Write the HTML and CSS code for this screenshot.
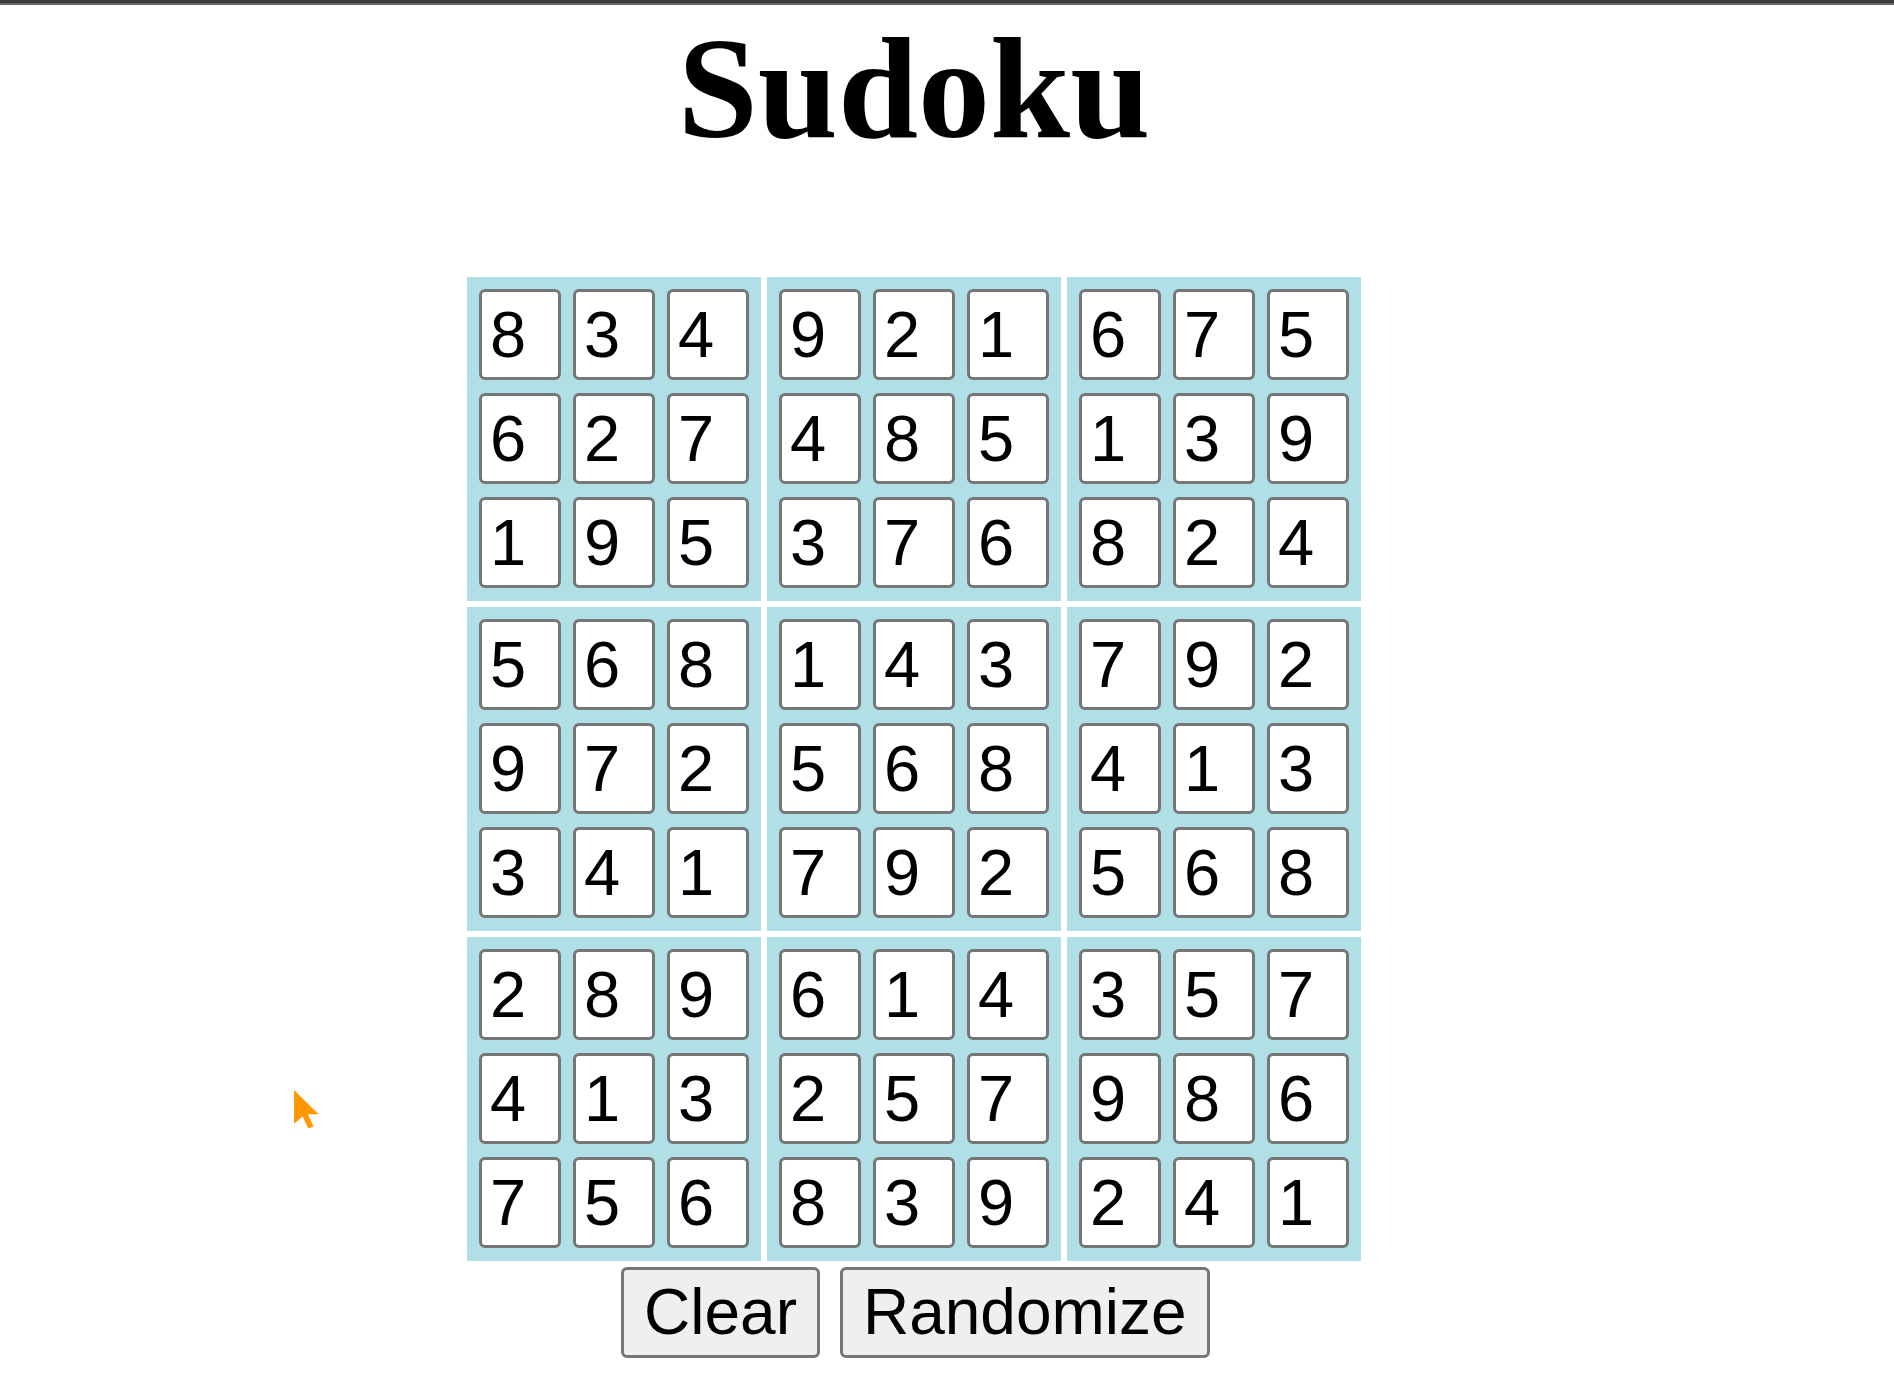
FILE: index.html
```html
<!DOCTYPE html>
<html lang="en">
<head>
<meta charset="utf-8">
<title>Sudoku</title>
<link rel="stylesheet" href="styles.css">
</head>
<body>
<div class="topbar"></div>
<div class="page">
  <main class="game">
    <h1 class="title">Sudoku</h1>
    <div class="board">
      <div class="block"><div class="cell">8</div><div class="cell">3</div><div class="cell">4</div><div class="cell">6</div><div class="cell">2</div><div class="cell">7</div><div class="cell">1</div><div class="cell">9</div><div class="cell">5</div></div>
      <div class="block"><div class="cell">9</div><div class="cell">2</div><div class="cell">1</div><div class="cell">4</div><div class="cell">8</div><div class="cell">5</div><div class="cell">3</div><div class="cell">7</div><div class="cell">6</div></div>
      <div class="block"><div class="cell">6</div><div class="cell">7</div><div class="cell">5</div><div class="cell">1</div><div class="cell">3</div><div class="cell">9</div><div class="cell">8</div><div class="cell">2</div><div class="cell">4</div></div>
      <div class="block"><div class="cell">5</div><div class="cell">6</div><div class="cell">8</div><div class="cell">9</div><div class="cell">7</div><div class="cell">2</div><div class="cell">3</div><div class="cell">4</div><div class="cell">1</div></div>
      <div class="block"><div class="cell">1</div><div class="cell">4</div><div class="cell">3</div><div class="cell">5</div><div class="cell">6</div><div class="cell">8</div><div class="cell">7</div><div class="cell">9</div><div class="cell">2</div></div>
      <div class="block"><div class="cell">7</div><div class="cell">9</div><div class="cell">2</div><div class="cell">4</div><div class="cell">1</div><div class="cell">3</div><div class="cell">5</div><div class="cell">6</div><div class="cell">8</div></div>
      <div class="block"><div class="cell">2</div><div class="cell">8</div><div class="cell">9</div><div class="cell">4</div><div class="cell">1</div><div class="cell">3</div><div class="cell">7</div><div class="cell">5</div><div class="cell">6</div></div>
      <div class="block"><div class="cell">6</div><div class="cell">1</div><div class="cell">4</div><div class="cell">2</div><div class="cell">5</div><div class="cell">7</div><div class="cell">8</div><div class="cell">3</div><div class="cell">9</div></div>
      <div class="block"><div class="cell">3</div><div class="cell">5</div><div class="cell">7</div><div class="cell">9</div><div class="cell">8</div><div class="cell">6</div><div class="cell">2</div><div class="cell">4</div><div class="cell">1</div></div>
    </div>
    <div class="controls">
      <button class="btn" type="button">Clear</button>
      <button class="btn" type="button">Randomize</button>
    </div>
  </main>
</div>
<svg class="cursor" width="26" height="39" viewBox="0 0 12 18" aria-hidden="true">
  <path d="M0 0 L0 15.6 L4 12.2 L6.6 17.8 L9 16.8 L6.4 11.2 L11.4 11.2 Z" fill="#ff9800"/>
</svg>
</body>
</html>
```
FILE: styles.css
```css
html, body {
  margin: 0;
  padding: 0;
  background: #ffffff;
}

body {
  position: relative;
  min-height: 1383px;
  font-family: "Liberation Sans", Arial, sans-serif;
  color: #000;
}

.topbar {
  height: 3px;
  background: #3a3a3c;
  border-bottom: 2px solid #68686a;
}

.page {
  padding-right: 66px;
}

.game {
  width: 894px;
  margin: 0 auto;
  display: flex;
  flex-direction: column;
}

.title {
  margin: 0;
  padding-top: 12px;
  height: 260px;
  box-sizing: border-box;
  text-align: center;
  font-family: "Liberation Serif", "Times New Roman", serif;
  font-weight: bold;
  font-size: 144px;
  line-height: 144px;
}

.board {
  display: grid;
  grid-template-columns: repeat(3, 294px);
  grid-auto-rows: 324px;
  gap: 6px;
  margin-top: 12px;
}

.block {
  background: #b0e0e6;
  padding: 12px 12px 13px 12px;
  display: grid;
  grid-template-columns: repeat(3, 82px);
  grid-auto-rows: 91px;
  column-gap: 12px;
  row-gap: 13px;
}

.cell {
  box-sizing: border-box;
  background: #ffffff;
  border: 3px solid #767676;
  border-radius: 6px;
  padding-left: 8px;
  font-size: 65px;
  line-height: 85px;
}

.controls {
  display: flex;
  gap: 20px;
  margin-top: 6px;
  padding-left: 154px;
}

.btn {
  box-sizing: border-box;
  height: 91px;
  background: #efefef;
  border: 3px solid #767676;
  border-radius: 6px;
  padding: 0 20px;
  font-family: "Liberation Sans", Arial, sans-serif;
  font-size: 64px;
  line-height: 73px;
  color: #000;
}

.cursor {
  position: absolute;
  left: 294px;
  top: 1090px;
}
```
